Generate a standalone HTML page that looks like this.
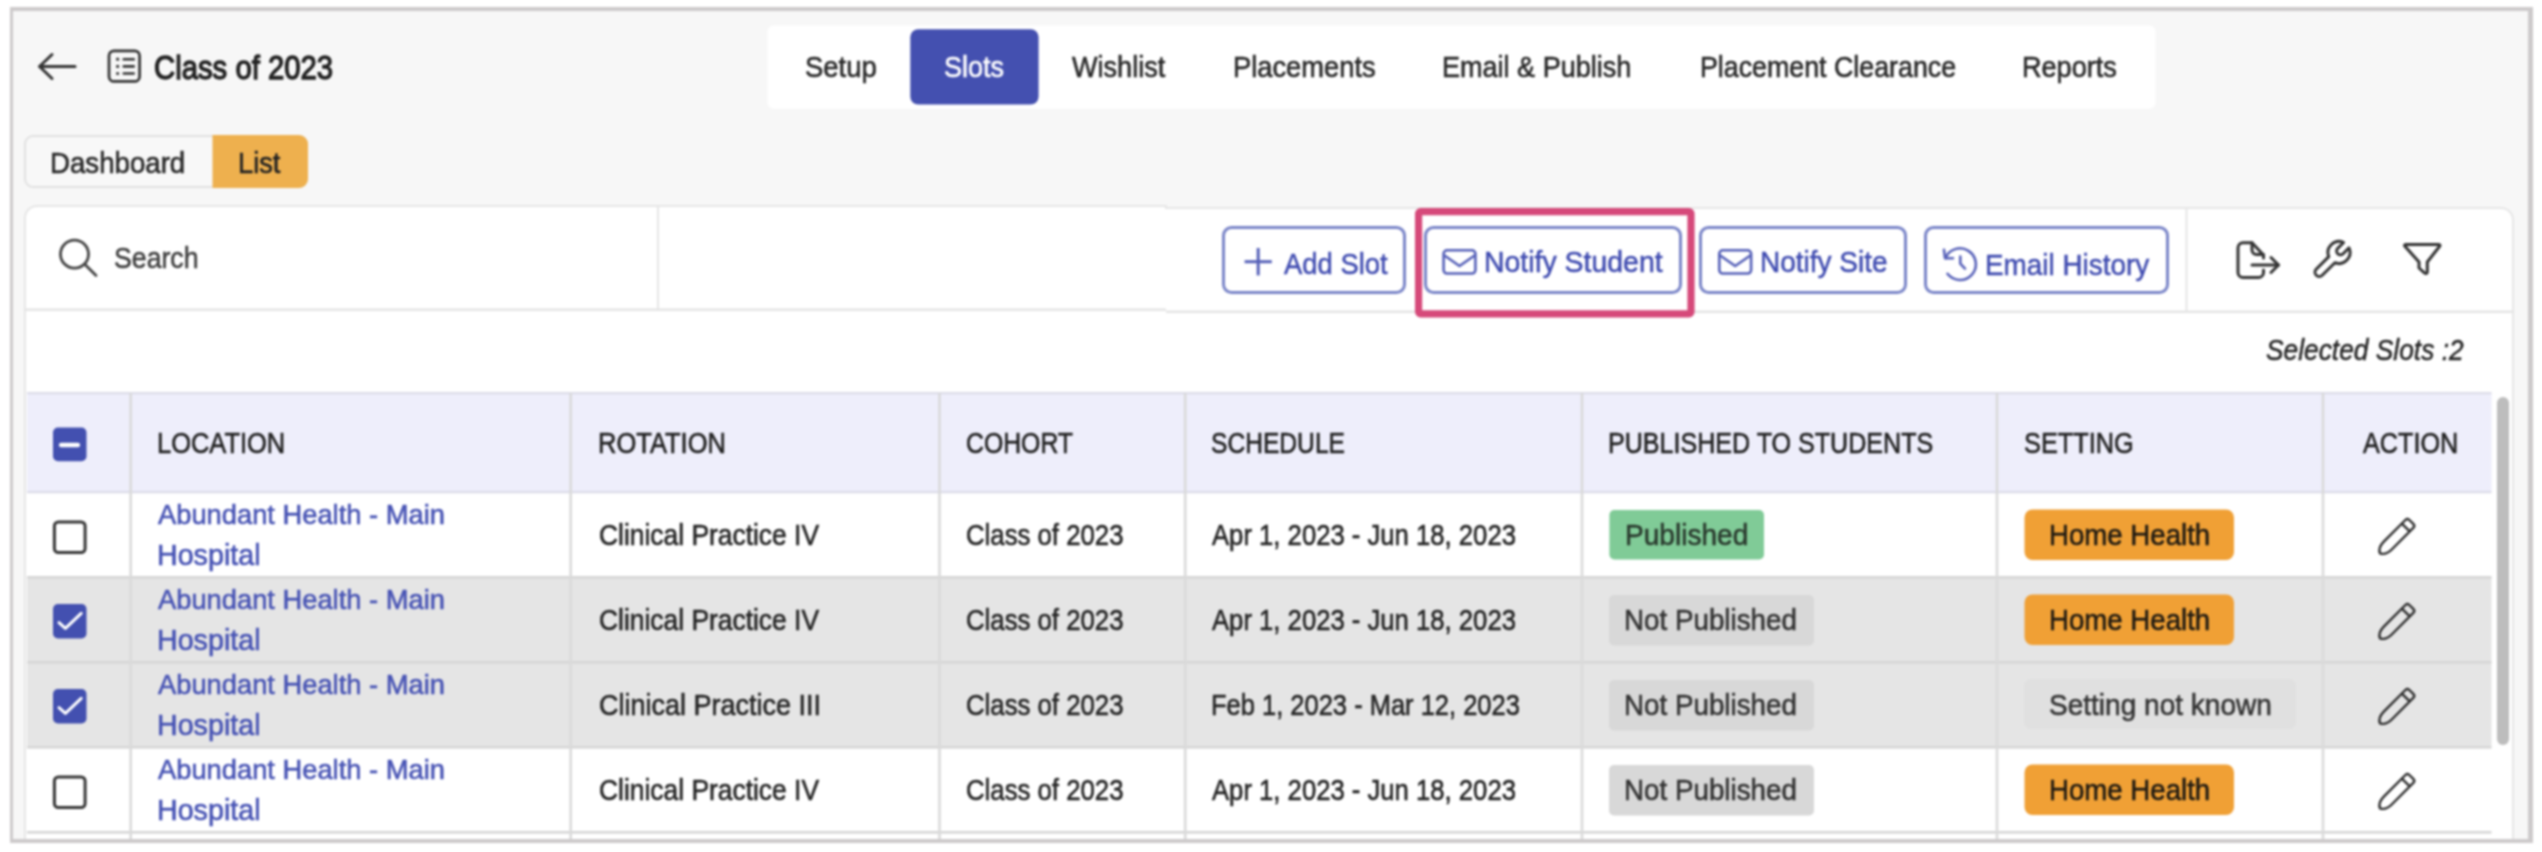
<!DOCTYPE html>
<html><head><meta charset="utf-8"><style>
html,body{margin:0;padding:0;background:#fff;}
body{width:2542px;height:852px;overflow:hidden;position:relative;font-family:"Liberation Sans",sans-serif;}
svg{position:absolute;left:0;top:0;}
#w{position:absolute;left:0;top:0;width:2542px;height:852px;filter:blur(1px);}
.t{position:absolute;white-space:nowrap;line-height:0;transform-origin:0 0;}
</style></head><body><div id="w">
<svg width="2542" height="852" viewBox="0 0 2542 852">
<rect x="10" y="7" width="2523" height="836" fill="#f7f7f7"/>
<g fill="none" stroke="#333" stroke-width="3" stroke-linecap="round" stroke-linejoin="round"><path d="M40 66.5 H75"/><path d="M52 54.5 L39.5 66.5 L52 78.5"/></g>
<g fill="none" stroke="#333" stroke-width="2.7"><rect x="109" y="50.8" width="30.6" height="30.6" rx="5"/></g>
<g fill="#333"><circle cx="117.6" cy="59.2" r="1.6"/><circle cx="117.6" cy="66.4" r="1.6"/><circle cx="117.6" cy="73.5" r="1.6"/><rect x="122.5" y="58" width="12.5" height="2.6" rx="1.2"/><rect x="122.5" y="65.1" width="12.5" height="2.6" rx="1.2"/><rect x="122.5" y="72.2" width="12.5" height="2.6" rx="1.2"/></g>
<rect x="767.5" y="25.5" width="1388" height="83.3" rx="6" fill="#fff"/>
<rect x="910.3" y="29.2" width="128.3" height="75.4" rx="8" fill="#4450b0"/>
<rect x="25" y="136" width="282" height="51" rx="8" fill="#f8f8f8" stroke="#e1e1e1" stroke-width="2"/>
<path d="M212.5 135 H299 A9 9 0 0 1 308 144 V179 A9 9 0 0 1 299 188 H212.5 Z" fill="#eeb04e"/>
<path d="M25 218 A12 12 0 0 1 37 206 H1166 V208 H2501 A12 12 0 0 1 2513 220 V967 H25 Z" fill="#fff" stroke="#e6e6e6" stroke-width="2"/>
<rect x="24" y="308.5" width="1142" height="2.4" fill="#e4e4e4"/>
<rect x="1166" y="310.6" width="1348" height="2.4" fill="#e4e4e4"/>
<rect x="657" y="207" width="2" height="102" fill="#e6e6e6"/>
<rect x="2185.5" y="209" width="2" height="102" fill="#e6e6e6"/>
<g fill="none" stroke="#444" stroke-width="2.8" stroke-linecap="round"><circle cx="74.5" cy="254.2" r="14"/><path d="M85 264.5 L96 275.5"/></g>
<rect x="1223.5" y="227.5" width="181" height="65" rx="8" fill="#fff" stroke="#7a85c8" stroke-width="3"/>
<rect x="1425.5" y="227.5" width="255" height="65" rx="8" fill="#fff" stroke="#7a85c8" stroke-width="3"/>
<rect x="1700.5" y="227.5" width="205" height="65" rx="8" fill="#fff" stroke="#7a85c8" stroke-width="3"/>
<rect x="1925.5" y="227.5" width="242" height="65" rx="8" fill="#fff" stroke="#7a85c8" stroke-width="3"/>
<g stroke="#5560b8" stroke-width="3" stroke-linecap="butt"><path d="M1258.2 248 V275.4"/><path d="M1244.6 261.7 H1271.8"/></g>
<g fill="none" stroke="#5560b8" stroke-width="2.6" stroke-linejoin="round"><rect x="1443.6" y="250.3" width="31.8" height="23.2" rx="3.5"/><path d="M1443.8 255 L1459.5 266 L1475.3 255"/></g>
<g fill="none" stroke="#5560b8" stroke-width="2.6" stroke-linejoin="round"><rect x="1719.3" y="250.3" width="31.8" height="23.2" rx="3.5"/><path d="M1719.5 255 L1735.2 266 L1751 255"/></g>
<g fill="none" stroke="#5862b9" stroke-width="2.6" stroke-linecap="round" stroke-linejoin="round"><path d="M1945.4 258.2 A15.8 15.8 0 1 1 1947.5 273.8"/><path d="M1944 249.8 L1945 258.2 L1953 258.2"/><path d="M1960.3 256.6 V263.6 L1965 268.6"/></g>
<rect x="1418.6" y="211.6" width="272.4" height="102.2" rx="2" fill="none" stroke="#d6497a" stroke-width="7.2"/>
<g fill="none" stroke="#333" stroke-width="3" stroke-linecap="round" stroke-linejoin="round"><path d="M2263.5 258 V255 L2252 242.8 H2243 A5 5 0 0 0 2238 247.8 V272.5 A5 5 0 0 0 2243 277.5 H2258.5 A5 5 0 0 0 2263.5 272.5 V270"/><path d="M2252 242.8 V250 A4.5 4.5 0 0 0 2256.5 254.5 H2263.5"/><path d="M2252 265 H2278.5"/><path d="M2271 257.5 L2278.5 265 L2271 272.5"/></g>
<g fill="none" stroke="#333" stroke-width="2.9" stroke-linejoin="round"><path d="M2328.8 256.62 A11 11 0 0 1 2343.61 242.51 L2337.72 248.4 A3.8 3.8 0 0 0 2343.1 253.78 L2348.99 247.89 A11 11 0 0 1 2334.88 262.7 L2322.24 275.34 A4.3 4.3 0 0 1 2316.16 269.26 Z"/></g>
<g fill="none" stroke="#333" stroke-width="3" stroke-linejoin="round"><path d="M2405.5 244.5 H2439 A1 1 0 0 1 2439.8 246 L2427.3 262 V272 A1.5 1.5 0 0 1 2425 273.3 L2419 268 V262 L2404.7 246 A1 1 0 0 1 2405.5 244.5 Z"/></g>
<rect x="27" y="392.5" width="2464.5" height="100" fill="#eeeefb"/>
<rect x="27" y="392" width="2464.5" height="2.2" fill="#dcdce8"/>
<rect x="27" y="491" width="2464.5" height="2.2" fill="#dcdce8"/>
<rect x="27" y="577" width="2464.5" height="170" fill="#e5e5e5"/>
<rect x="27" y="576" width="2464.5" height="2.6" fill="#d6d6d6"/>
<rect x="27" y="661" width="2464.5" height="2.6" fill="#d6d6d6"/>
<rect x="27" y="746" width="2464.5" height="2.6" fill="#d6d6d6"/>
<rect x="27" y="831" width="2464.5" height="2.6" fill="#d6d6d6"/>
<rect x="129.39999999999998" y="393" width="2.6" height="447" fill="#dadada"/>
<rect x="569.4000000000001" y="393" width="2.6" height="447" fill="#dadada"/>
<rect x="938.2" y="393" width="2.6" height="447" fill="#dadada"/>
<rect x="1183.9" y="393" width="2.6" height="447" fill="#dadada"/>
<rect x="1580.7" y="393" width="2.6" height="447" fill="#dadada"/>
<rect x="1995.7" y="393" width="2.6" height="447" fill="#dadada"/>
<rect x="2321.7" y="393" width="2.6" height="447" fill="#dadada"/>
<rect x="2497" y="397" width="12" height="348" rx="6" fill="#bdbdbd"/>
<rect x="53" y="427.5" width="33.5" height="33.8" rx="5" fill="#4350b0"/>
<rect x="59" y="442.7" width="21" height="4.6" rx="2" fill="#fff"/>
<rect x="54.4" y="522" width="30.7" height="30.5" rx="4" fill="#fff" stroke="#363636" stroke-width="3"/>
<rect x="1609.4" y="510" width="154.6" height="49.5" rx="5" fill="#80cb97"/>
<rect x="2024.5" y="509.5" width="209.5" height="50.5" rx="8" fill="#f0a035"/>
<g transform="translate(2380 553.3) rotate(-45)" fill="none" stroke="#2e2e2e" stroke-width="2.4" stroke-linejoin="round"><path d="M0 0 C1.5 -3.5 4 -5.6 11 -5.6 H41.5 A2.8 2.8 0 0 1 44.3 -2.8 V2.8 A2.8 2.8 0 0 1 41.5 5.6 H11 C4 5.6 1.5 3.5 0 0 Z"/><path d="M36.5 -5.6 V5.6"/></g>
<rect x="53" y="604" width="33.5" height="34.5" rx="5" fill="#4350b0"/>
<path d="M59 622.7 L65.4 628.4 L81.2 613.4" fill="none" stroke="#fff" stroke-width="3" stroke-linecap="round" stroke-linejoin="round"/>
<rect x="1609" y="595" width="205" height="50.5" rx="5" fill="#d8d8d8"/>
<rect x="2024.5" y="594.5" width="209.5" height="50.5" rx="8" fill="#f0a035"/>
<g transform="translate(2380 638.3) rotate(-45)" fill="none" stroke="#2e2e2e" stroke-width="2.4" stroke-linejoin="round"><path d="M0 0 C1.5 -3.5 4 -5.6 11 -5.6 H41.5 A2.8 2.8 0 0 1 44.3 -2.8 V2.8 A2.8 2.8 0 0 1 41.5 5.6 H11 C4 5.6 1.5 3.5 0 0 Z"/><path d="M36.5 -5.6 V5.6"/></g>
<rect x="53" y="689" width="33.5" height="34.5" rx="5" fill="#4350b0"/>
<path d="M59 707.7 L65.4 713.4 L81.2 698.4" fill="none" stroke="#fff" stroke-width="3" stroke-linecap="round" stroke-linejoin="round"/>
<rect x="1609" y="680" width="205" height="50.5" rx="5" fill="#d8d8d8"/>
<rect x="2024" y="679" width="272" height="50" rx="7" fill="#e0e0e0"/>
<g transform="translate(2380 723.3) rotate(-45)" fill="none" stroke="#2e2e2e" stroke-width="2.4" stroke-linejoin="round"><path d="M0 0 C1.5 -3.5 4 -5.6 11 -5.6 H41.5 A2.8 2.8 0 0 1 44.3 -2.8 V2.8 A2.8 2.8 0 0 1 41.5 5.6 H11 C4 5.6 1.5 3.5 0 0 Z"/><path d="M36.5 -5.6 V5.6"/></g>
<rect x="54.4" y="777" width="30.7" height="30.5" rx="4" fill="#fff" stroke="#363636" stroke-width="3"/>
<rect x="1609" y="765" width="205" height="50.5" rx="5" fill="#d8d8d8"/>
<rect x="2024.5" y="764.5" width="209.5" height="50.5" rx="8" fill="#f0a035"/>
<g transform="translate(2380 808.3) rotate(-45)" fill="none" stroke="#2e2e2e" stroke-width="2.4" stroke-linejoin="round"><path d="M0 0 C1.5 -3.5 4 -5.6 11 -5.6 H41.5 A2.8 2.8 0 0 1 44.3 -2.8 V2.8 A2.8 2.8 0 0 1 41.5 5.6 H11 C4 5.6 1.5 3.5 0 0 Z"/><path d="M36.5 -5.6 V5.6"/></g>
<path d="M10 7 H2533 V843 H10 Z M13 11 V839 H2528 V11 Z" fill="#cdcacb" fill-rule="evenodd"/>
<rect x="0" y="843" width="2542" height="9" fill="#fff"/>
</svg>
<div class="t" style="left:154.13px;top:67.87px;font-size:33.58px;color:#222;transform:scaleX(0.8725);-webkit-text-stroke:1.3px #222;">Class of 2023</div>
<div class="t" style="left:804.78px;top:66.68px;font-size:29.80px;color:#282828;transform:scaleX(0.9224);-webkit-text-stroke:0.6px #282828;">Setup</div>
<div class="t" style="left:944.09px;top:66.68px;font-size:29.80px;color:#fff;transform:scaleX(0.9077);-webkit-text-stroke:0.6px #fff;">Slots</div>
<div class="t" style="left:1071.70px;top:66.68px;font-size:29.80px;color:#282828;transform:scaleX(0.9087);-webkit-text-stroke:0.6px #282828;">Wishlist</div>
<div class="t" style="left:1232.87px;top:66.68px;font-size:29.80px;color:#282828;transform:scaleX(0.9163);-webkit-text-stroke:0.6px #282828;">Placements</div>
<div class="t" style="left:1442.39px;top:66.68px;font-size:29.80px;color:#282828;transform:scaleX(0.9073);-webkit-text-stroke:0.6px #282828;">Email &amp; Publish</div>
<div class="t" style="left:1699.50px;top:66.68px;font-size:29.80px;color:#282828;transform:scaleX(0.8989);-webkit-text-stroke:0.6px #282828;">Placement Clearance</div>
<div class="t" style="left:2022.18px;top:66.68px;font-size:29.80px;color:#282828;transform:scaleX(0.9088);-webkit-text-stroke:0.6px #282828;">Reports</div>
<div class="t" style="left:50.37px;top:162.72px;font-size:30.23px;color:#282828;transform:scaleX(0.9146);-webkit-text-stroke:0.6px #282828;">Dashboard</div>
<div class="t" style="left:238.20px;top:162.72px;font-size:30.23px;color:#222;transform:scaleX(0.9022);-webkit-text-stroke:0.6px #222;">List</div>
<div class="t" style="left:114.29px;top:257.58px;font-size:29.22px;color:#3c3c3c;transform:scaleX(0.9133);-webkit-text-stroke:0.5px #3c3c3c;">Search</div>
<div class="t" style="left:1283.80px;top:262.77px;font-size:30.38px;color:#3f4bb0;transform:scaleX(0.9026);-webkit-text-stroke:0.5px #3f4bb0;">Add Slot</div>
<div class="t" style="left:1484.40px;top:262.23px;font-size:29.94px;color:#3f4bb0;transform:scaleX(0.9500);-webkit-text-stroke:0.5px #3f4bb0;">Notify Student</div>
<div class="t" style="left:1760.43px;top:262.23px;font-size:29.94px;color:#3f4bb0;transform:scaleX(0.9351);-webkit-text-stroke:0.5px #3f4bb0;">Notify Site</div>
<div class="t" style="left:1984.94px;top:264.73px;font-size:29.94px;color:#3f4bb0;transform:scaleX(0.9309);-webkit-text-stroke:0.5px #3f4bb0;">Email History</div>
<div class="t" style="left:2266.49px;top:349.93px;font-size:29.07px;color:#262626;transform:scaleX(0.9060);font-style:italic;-webkit-text-stroke:0.5px #262626;">Selected Slots :2</div>
<div class="t" style="left:157.05px;top:442.93px;font-size:29.07px;color:#222;transform:scaleX(0.8755);-webkit-text-stroke:0.6px #222;">LOCATION</div>
<div class="t" style="left:598.25px;top:442.93px;font-size:29.07px;color:#222;transform:scaleX(0.8768);-webkit-text-stroke:0.6px #222;">ROTATION</div>
<div class="t" style="left:965.85px;top:442.93px;font-size:29.07px;color:#222;transform:scaleX(0.8532);-webkit-text-stroke:0.6px #222;">COHORT</div>
<div class="t" style="left:1211.45px;top:442.93px;font-size:29.07px;color:#222;transform:scaleX(0.8465);-webkit-text-stroke:0.6px #222;">SCHEDULE</div>
<div class="t" style="left:1608.27px;top:442.93px;font-size:29.07px;color:#222;transform:scaleX(0.8631);-webkit-text-stroke:0.6px #222;">PUBLISHED TO STUDENTS</div>
<div class="t" style="left:2023.63px;top:442.93px;font-size:29.07px;color:#222;transform:scaleX(0.8707);-webkit-text-stroke:0.6px #222;">SETTING</div>
<div class="t" style="left:2363.30px;top:442.93px;font-size:29.07px;color:#222;transform:scaleX(0.8676);-webkit-text-stroke:0.6px #222;">ACTION</div>
<div class="t" style="left:158.30px;top:514.23px;font-size:28.49px;color:#4753b4;transform:scaleX(0.9587);-webkit-text-stroke:0.6px #4753b4;">Abundant Health - Main</div>
<div class="t" style="left:156.81px;top:555.43px;font-size:28.78px;color:#4753b4;transform:scaleX(0.9960);-webkit-text-stroke:0.6px #4753b4;">Hospital</div>
<div class="t" style="left:599.12px;top:534.83px;font-size:29.94px;color:#252525;transform:scaleX(0.8815);-webkit-text-stroke:0.6px #252525;">Clinical Practice IV</div>
<div class="t" style="left:965.84px;top:534.83px;font-size:29.94px;color:#252525;transform:scaleX(0.8602);-webkit-text-stroke:0.6px #252525;">Class of 2023</div>
<div class="t" style="left:1212.20px;top:534.83px;font-size:29.94px;color:#252525;transform:scaleX(0.8573);-webkit-text-stroke:0.6px #252525;">Apr 1, 2023 - Jun 18, 2023</div>
<div class="t" style="left:1624.83px;top:534.83px;font-size:29.94px;color:#2a3a2e;transform:scaleX(0.9375);-webkit-text-stroke:0.6px #2a3a2e;">Published</div>
<div class="t" style="left:2049.05px;top:534.83px;font-size:29.94px;color:#1f1a12;transform:scaleX(0.9228);-webkit-text-stroke:0.6px #1f1a12;">Home Health</div>
<div class="t" style="left:158.30px;top:599.23px;font-size:28.49px;color:#4753b4;transform:scaleX(0.9587);-webkit-text-stroke:0.6px #4753b4;">Abundant Health - Main</div>
<div class="t" style="left:156.81px;top:640.43px;font-size:28.78px;color:#4753b4;transform:scaleX(0.9960);-webkit-text-stroke:0.6px #4753b4;">Hospital</div>
<div class="t" style="left:599.12px;top:619.83px;font-size:29.94px;color:#252525;transform:scaleX(0.8815);-webkit-text-stroke:0.6px #252525;">Clinical Practice IV</div>
<div class="t" style="left:965.84px;top:619.83px;font-size:29.94px;color:#252525;transform:scaleX(0.8602);-webkit-text-stroke:0.6px #252525;">Class of 2023</div>
<div class="t" style="left:1212.20px;top:619.83px;font-size:29.94px;color:#252525;transform:scaleX(0.8573);-webkit-text-stroke:0.6px #252525;">Apr 1, 2023 - Jun 18, 2023</div>
<div class="t" style="left:1624.14px;top:619.83px;font-size:29.94px;color:#333;transform:scaleX(0.9279);-webkit-text-stroke:0.6px #333;">Not Published</div>
<div class="t" style="left:2049.05px;top:619.83px;font-size:29.94px;color:#1f1a12;transform:scaleX(0.9228);-webkit-text-stroke:0.6px #1f1a12;">Home Health</div>
<div class="t" style="left:158.30px;top:684.23px;font-size:28.49px;color:#4753b4;transform:scaleX(0.9587);-webkit-text-stroke:0.6px #4753b4;">Abundant Health - Main</div>
<div class="t" style="left:156.81px;top:725.43px;font-size:28.78px;color:#4753b4;transform:scaleX(0.9960);-webkit-text-stroke:0.6px #4753b4;">Hospital</div>
<div class="t" style="left:599.10px;top:704.83px;font-size:29.94px;color:#252525;transform:scaleX(0.9012);-webkit-text-stroke:0.6px #252525;">Clinical Practice III</div>
<div class="t" style="left:965.84px;top:704.83px;font-size:29.94px;color:#252525;transform:scaleX(0.8602);-webkit-text-stroke:0.6px #252525;">Class of 2023</div>
<div class="t" style="left:1210.50px;top:704.83px;font-size:29.94px;color:#252525;transform:scaleX(0.8514);-webkit-text-stroke:0.6px #252525;">Feb 1, 2023 - Mar 12, 2023</div>
<div class="t" style="left:1624.14px;top:704.83px;font-size:29.94px;color:#333;transform:scaleX(0.9279);-webkit-text-stroke:0.6px #333;">Not Published</div>
<div class="t" style="left:2049.06px;top:704.83px;font-size:29.94px;color:#333;transform:scaleX(0.9364);-webkit-text-stroke:0.6px #333;">Setting not known</div>
<div class="t" style="left:158.30px;top:769.23px;font-size:28.49px;color:#4753b4;transform:scaleX(0.9587);-webkit-text-stroke:0.6px #4753b4;">Abundant Health - Main</div>
<div class="t" style="left:156.81px;top:810.43px;font-size:28.78px;color:#4753b4;transform:scaleX(0.9960);-webkit-text-stroke:0.6px #4753b4;">Hospital</div>
<div class="t" style="left:599.12px;top:789.83px;font-size:29.94px;color:#252525;transform:scaleX(0.8815);-webkit-text-stroke:0.6px #252525;">Clinical Practice IV</div>
<div class="t" style="left:965.84px;top:789.83px;font-size:29.94px;color:#252525;transform:scaleX(0.8602);-webkit-text-stroke:0.6px #252525;">Class of 2023</div>
<div class="t" style="left:1212.20px;top:789.83px;font-size:29.94px;color:#252525;transform:scaleX(0.8573);-webkit-text-stroke:0.6px #252525;">Apr 1, 2023 - Jun 18, 2023</div>
<div class="t" style="left:1624.14px;top:789.83px;font-size:29.94px;color:#333;transform:scaleX(0.9279);-webkit-text-stroke:0.6px #333;">Not Published</div>
<div class="t" style="left:2049.05px;top:789.83px;font-size:29.94px;color:#1f1a12;transform:scaleX(0.9228);-webkit-text-stroke:0.6px #1f1a12;">Home Health</div>
</div></body></html>
